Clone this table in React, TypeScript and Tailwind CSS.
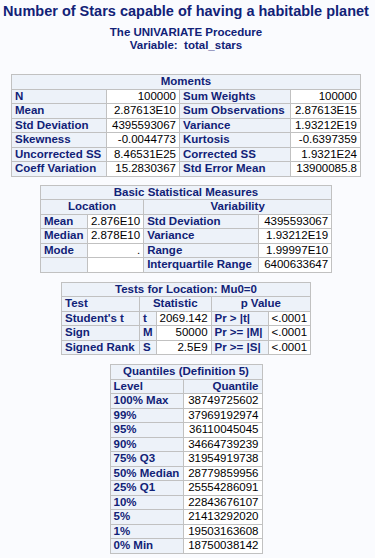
import React from "react";

// SAS "HTMLBlue"-style output of PROC UNIVARIATE
const hd = "bg-[#edf2f9] text-[#112277] font-bold border border-[#c1c1c1] px-[3px] h-[13.5px] leading-[13.5px] whitespace-nowrap";
const dt = "bg-white text-black border border-[#c1c1c1] px-[3px] h-[13.5px] leading-[13.5px] text-right whitespace-nowrap";

function Title({ children, span }: { children: React.ReactNode; span: number }) {
  return (
    <tr>
      <th colSpan={span} className={`${hd} text-center`}>
        {children}
      </th>
    </tr>
  );
}

export default function App() {
  const moments = [
    ["N", "100000", "Sum Weights", "100000"],
    ["Mean", "2.87613E10", "Sum Observations", "2.87613E15"],
    ["Std Deviation", "4395593067", "Variance", "1.93212E19"],
    ["Skewness", "-0.0044773", "Kurtosis", "-0.6397359"],
    ["Uncorrected SS", "8.46531E25", "Corrected SS", "1.9321E24"],
    ["Coeff Variation", "15.2830367", "Std Error Mean", "13900085.8"],
  ];

  const basic = [
    ["Mean", "2.876E10", "Std Deviation", "4395593067"],
    ["Median", "2.878E10", "Variance", "1.93212E19"],
    ["Mode", ".", "Range", "1.99997E10"],
    ["", "", "Interquartile Range", "6400633647"],
  ];

  const tests = [
    ["Student's t", "t", "2069.142", "Pr > |t|", "<.0001"],
    ["Sign", "M", "50000", "Pr >= |M|", "<.0001"],
    ["Signed Rank", "S", "2.5E9", "Pr >= |S|", "<.0001"],
  ];

  const quantiles = [
    ["100% Max", "38749725602"],
    ["99%", "37969192974"],
    ["95%", "36110045045"],
    ["90%", "34664739239"],
    ["75% Q3", "31954919738"],
    ["50% Median", "28779859956"],
    ["25% Q1", "25554286091"],
    ["10%", "22843676107"],
    ["5%", "21413292020"],
    ["1%", "19503163608"],
    ["0% Min", "18750038142"],
  ];

  return (
    <div className="w-[375px] h-[558px] overflow-hidden bg-[#fafbfe] font-['Liberation_Sans',Arial,sans-serif] text-[11.5px]">
      <div className="w-[372px] flex flex-col items-center">
        <h1 className="pt-[3px] text-[14.5px] leading-[16px] font-bold text-[#112277] whitespace-nowrap">
          Number of Stars capable of having a habitable planet
        </h1>
        <div className="mt-[7px] text-center font-bold text-[#112277] leading-[13px]">
          <p>The UNIVARIATE Procedure</p>
          <p>Variable:&nbsp; total_stars</p>
        </div>

        {/* Moments */}
        <table className="mt-[22px] table-fixed border-collapse border border-[#c1c1c1]">
          <colgroup>
            <col className="w-[95px]" />
            <col className="w-[73px]" />
            <col className="w-[111px]" />
            <col className="w-[70px]" />
          </colgroup>
          <tbody>
            <Title span={4}>Moments</Title>
            {moments.map((r) => (
              <tr key={r[0]}>
                <th className={`${hd} text-left`}>{r[0]}</th>
                <td className={dt}>{r[1]}</td>
                <th className={`${hd} text-left`}>{r[2]}</th>
                <td className={dt}>{r[3]}</td>
              </tr>
            ))}
          </tbody>
        </table>

        {/* Basic Statistical Measures */}
        <table className="mt-[8px] table-fixed border-collapse border border-[#c1c1c1]">
          <colgroup>
            <col className="w-[47px]" />
            <col className="w-[55px]" />
            <col className="w-[115px]" />
            <col className="w-[73px]" />
          </colgroup>
          <tbody>
            <Title span={4}>Basic Statistical Measures</Title>
            <tr>
              <th colSpan={2} className={`${hd} text-center`}>Location</th>
              <th colSpan={2} className={`${hd} text-center`}>Variability</th>
            </tr>
            {basic.map((r, i) => (
              <tr key={i}>
                <th className={`${hd} text-left`}>{r[0]}</th>
                <td className={dt}>{r[1]}</td>
                <th className={`${hd} text-left`}>{r[2]}</th>
                <td className={dt}>{r[3]}</td>
              </tr>
            ))}
          </tbody>
        </table>

        {/* Tests for Location */}
        <table className="mt-[9px] table-fixed border-collapse border border-[#c1c1c1]">
          <colgroup>
            <col className="w-[78px]" />
            <col className="w-[15px]" />
            <col className="w-[54px]" />
            <col className="w-[57px]" />
            <col className="w-[41px]" />
          </colgroup>
          <tbody>
            <Title span={5}>Tests for Location: Mu0=0</Title>
            <tr>
              <th className={`${hd} text-left`}>Test</th>
              <th colSpan={2} className={`${hd} text-center`}>Statistic</th>
              <th colSpan={2} className={`${hd} text-center`}>p Value</th>
            </tr>
            {tests.map((r) => (
              <tr key={r[0]}>
                <th className={`${hd} text-left`}>{r[0]}</th>
                <th className={`${hd} text-left`}>{r[1]}</th>
                <td className={dt}>{r[2]}</td>
                <th className={`${hd} text-left`}>{r[3]}</th>
                <td className={`${dt} !text-left`}>{r[4]}</td>
              </tr>
            ))}
          </tbody>
        </table>

        {/* Quantiles */}
        <table className="mt-[9px] table-fixed border-collapse border border-[#c1c1c1]">
          <colgroup>
            <col className="w-[73px]" />
            <col className="w-[79px]" />
          </colgroup>
          <tbody>
            <Title span={2}>Quantiles (Definition 5)</Title>
            <tr>
              <th className={`${hd} text-left`}>Level</th>
              <th className={`${hd} text-right`}>Quantile</th>
            </tr>
            {quantiles.map((r) => (
              <tr key={r[0]}>
                <th className={`${hd} text-left`}>{r[0]}</th>
                <td className={dt}>{r[1]}</td>
              </tr>
            ))}
          </tbody>
        </table>
      </div>
    </div>
  );
}
